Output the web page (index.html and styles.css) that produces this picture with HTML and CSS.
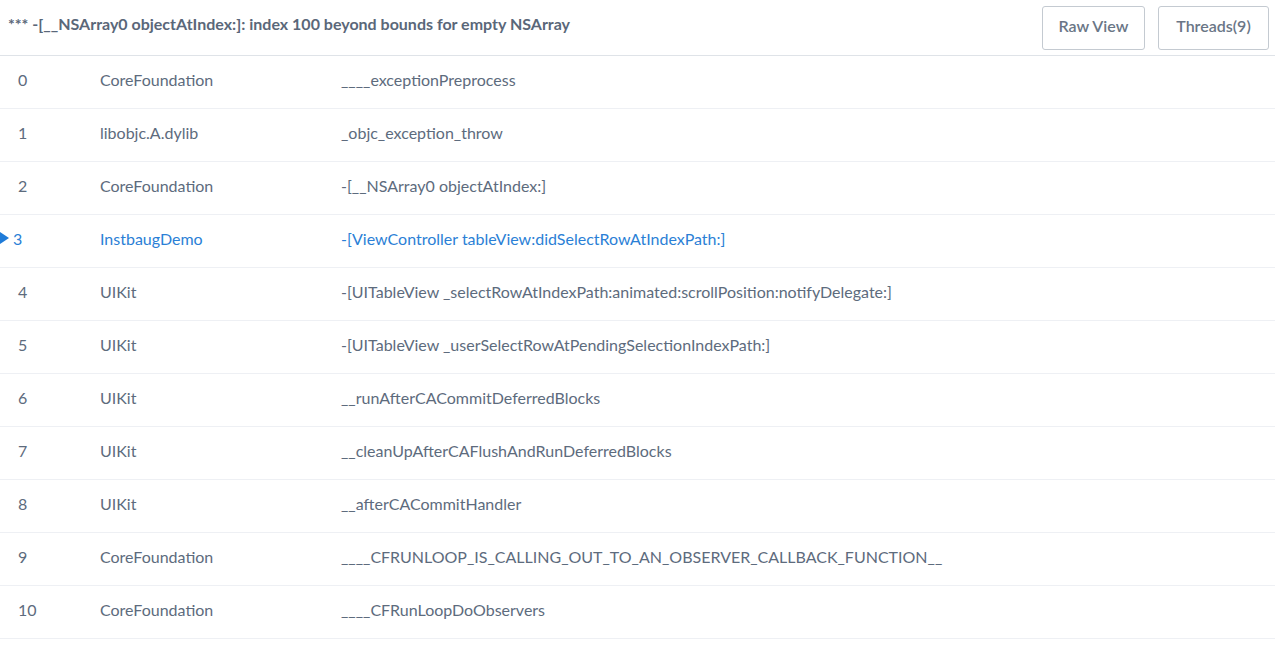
FILE: index.html
```html
<!DOCTYPE html>
<html>
<head>
<meta charset="utf-8">
<link rel="stylesheet" href="styles.css">
</head>
<body>
<div class="page">
  <header class="topbar">
    <div class="title">*** -[__NSArray0 objectAtIndex:]: index 100 beyond bounds for empty NSArray</div>
    <div class="actions">
      <button class="btn">Raw View</button>
      <button class="btn btn-threads">Threads(9)</button>
    </div>
  </header>
  <div class="stack">
    <div class="row"><span class="num">0</span><span class="lib">CoreFoundation</span><span class="sym">____exceptionPreprocess</span></div>
    <div class="row"><span class="num">1</span><span class="lib">libobjc.A.dylib</span><span class="sym">_objc_exception_throw</span></div>
    <div class="row"><span class="num">2</span><span class="lib">CoreFoundation</span><span class="sym">-[__NSArray0 objectAtIndex:]</span></div>
    <div class="row active"><span class="num"><span class="marker"></span>3</span><span class="lib">InstbaugDemo</span><span class="sym">-[ViewController tableView:didSelectRowAtIndexPath:]</span></div>
    <div class="row"><span class="num">4</span><span class="lib">UIKit</span><span class="sym">-[UITableView _selectRowAtIndexPath:animated:scrollPosition:notifyDelegate:]</span></div>
    <div class="row"><span class="num">5</span><span class="lib">UIKit</span><span class="sym">-[UITableView _userSelectRowAtPendingSelectionIndexPath:]</span></div>
    <div class="row"><span class="num">6</span><span class="lib">UIKit</span><span class="sym">__runAfterCACommitDeferredBlocks</span></div>
    <div class="row"><span class="num">7</span><span class="lib">UIKit</span><span class="sym">__cleanUpAfterCAFlushAndRunDeferredBlocks</span></div>
    <div class="row"><span class="num">8</span><span class="lib">UIKit</span><span class="sym">__afterCACommitHandler</span></div>
    <div class="row"><span class="num">9</span><span class="lib">CoreFoundation</span><span class="sym">____CFRUNLOOP_IS_CALLING_OUT_TO_AN_OBSERVER_CALLBACK_FUNCTION__</span></div>
    <div class="row"><span class="num">10</span><span class="lib">CoreFoundation</span><span class="sym">____CFRunLoopDoObservers</span></div>
  </div>
</div>
</body>
</html>
```

FILE: styles.css
```css
html, body {
  margin: 0;
  padding: 0;
  background: #ffffff;
}
body {
  font-family: "Lato", "Open Sans", sans-serif;
  color: #5d6b7d;
  font-size: 16px;
}
.page {
  width: 1275px;
}
.topbar {
  height: 55px;
  border-bottom: 1px solid #dfe3e8;
  display: flex;
  align-items: center;
  justify-content: space-between;
  padding: 0 6px 0 8px;
}
.title {
  font-weight: 700;
  font-size: 16px;
  color: #5a6779;
  margin-bottom: 9px;
}
.actions {
  display: flex;
  gap: 13px;
  margin-top: 1px;
}
.btn {
  font-family: inherit;
  font-size: 16px;
  color: #6a7686;
  background: #fff;
  border: 1px solid #c4cad1;
  border-radius: 3px;
  height: 44px;
  width: 103px;
  padding: 0 0 6px;
  font-weight: 600;
}
.btn-threads {
  width: 111px;
}
.row {
  height: 52px;
  border-bottom: 1px solid #eef0f4;
  display: flex;
  align-items: center;
  box-sizing: content-box;
}
.row > span {
  margin-bottom: 6px;
}
.num {
  width: 100px;
  padding-left: 18px;
  box-sizing: border-box;
  position: relative;
}
.lib {
  width: 241px;
}
.sym {
  flex: 1;
}
.active {
  color: #2b7fd6;
}
.active .num {
  padding-left: 13px;
}
.marker {
  position: absolute;
  left: 0;
  top: 50%;
  margin-top: -6px;
  width: 0;
  height: 0;
  border-top: 6px solid transparent;
  border-bottom: 6px solid transparent;
  border-left: 9px solid #1f7bd8;
}
```
